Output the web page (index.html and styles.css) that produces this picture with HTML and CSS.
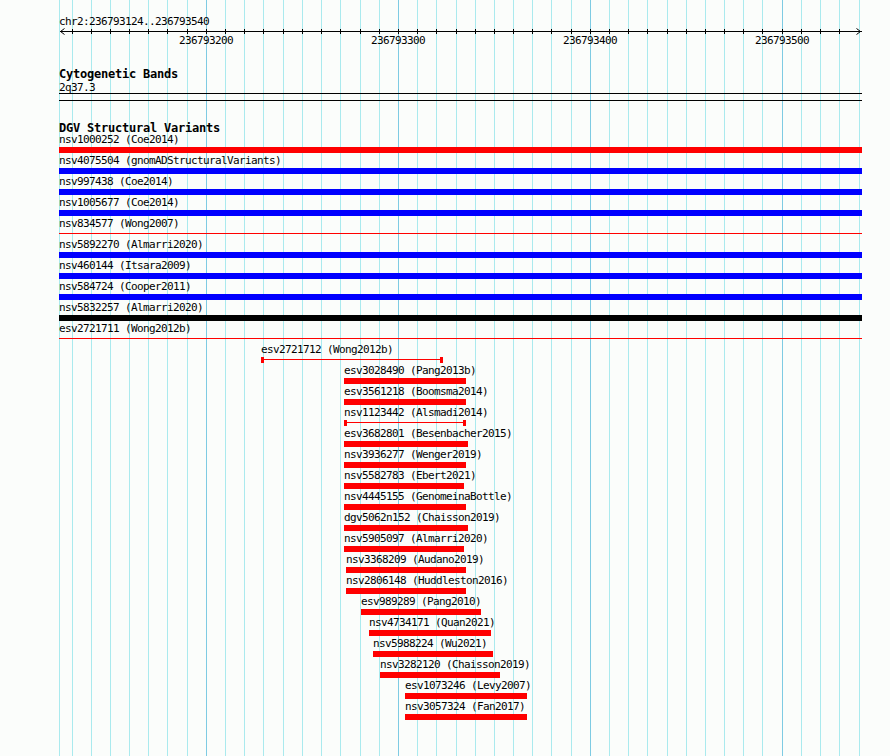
FILE: index.html
```html
<!DOCTYPE html>
<html lang="en">
<head>
    <meta charset="UTF-8">
    <meta name="viewport" content="width=device-width, initial-scale=1.0">
    <title>chr2:236793124..236793540</title>
    <link rel="stylesheet" href="styles.css">
</head>
<body>
<div class="browser">
    <!-- gridlines, every 10bp -->
    <div class="grid">
        <div class="gl" style="left:59px"></div>
        <div class="gl" style="left:72px"></div>
        <div class="gl" style="left:91px"></div>
        <div class="gl" style="left:110px"></div>
        <div class="gl" style="left:129px"></div>
        <div class="gl" style="left:148px"></div>
        <div class="gl" style="left:167px"></div>
        <div class="gl" style="left:187px"></div>
        <div class="gl major" style="left:206px"></div>
        <div class="gl" style="left:225px"></div>
        <div class="gl" style="left:244px"></div>
        <div class="gl" style="left:263px"></div>
        <div class="gl" style="left:283px"></div>
        <div class="gl" style="left:302px"></div>
        <div class="gl" style="left:321px"></div>
        <div class="gl" style="left:340px"></div>
        <div class="gl" style="left:360px"></div>
        <div class="gl" style="left:379px"></div>
        <div class="gl major" style="left:398px"></div>
        <div class="gl" style="left:417px"></div>
        <div class="gl" style="left:436px"></div>
        <div class="gl" style="left:456px"></div>
        <div class="gl" style="left:475px"></div>
        <div class="gl" style="left:494px"></div>
        <div class="gl" style="left:513px"></div>
        <div class="gl" style="left:532px"></div>
        <div class="gl" style="left:551px"></div>
        <div class="gl" style="left:571px"></div>
        <div class="gl major" style="left:590px"></div>
        <div class="gl" style="left:609px"></div>
        <div class="gl" style="left:628px"></div>
        <div class="gl" style="left:647px"></div>
        <div class="gl" style="left:667px"></div>
        <div class="gl" style="left:686px"></div>
        <div class="gl" style="left:705px"></div>
        <div class="gl" style="left:724px"></div>
        <div class="gl" style="left:743px"></div>
        <div class="gl" style="left:762px"></div>
        <div class="gl major" style="left:782px"></div>
        <div class="gl" style="left:801px"></div>
        <div class="gl" style="left:820px"></div>
        <div class="gl" style="left:839px"></div>
        <div class="gl" style="left:859px"></div>
    </div>

    <div class="tracks">
        <div class="locus">chr2:236793124..236793540</div>
        <svg class="ruler" width="803" height="8" viewBox="0 0 803 8">
            <line x1="1" y1="4.5" x2="803" y2="4.5" stroke="#000"/>
            <polyline points="5.5,1.5 1.5,4.5 5.5,7.5" fill="none" stroke="#000"/>
            <polyline points="797.5,1.5 801.5,4.5 797.5,7.5" fill="none" stroke="#000"/>
            <g stroke="#000">
                <line x1="13.5" y1="2" x2="13.5" y2="7"/><line x1="32.5" y1="2" x2="32.5" y2="7"/>
                <line x1="51.5" y1="2" x2="51.5" y2="7"/><line x1="70.5" y1="2" x2="70.5" y2="7"/>
                <line x1="89.5" y1="2" x2="89.5" y2="7"/><line x1="108.5" y1="2" x2="108.5" y2="7"/>
                <line x1="128.5" y1="2" x2="128.5" y2="7"/><line x1="147.5" y1="2" x2="147.5" y2="7"/>
                <line x1="166.5" y1="2" x2="166.5" y2="7"/><line x1="185.5" y1="2" x2="185.5" y2="7"/>
                <line x1="204.5" y1="2" x2="204.5" y2="7"/><line x1="224.5" y1="2" x2="224.5" y2="7"/>
                <line x1="243.5" y1="2" x2="243.5" y2="7"/><line x1="262.5" y1="2" x2="262.5" y2="7"/>
                <line x1="281.5" y1="2" x2="281.5" y2="7"/><line x1="301.5" y1="2" x2="301.5" y2="7"/>
                <line x1="320.5" y1="2" x2="320.5" y2="7"/><line x1="339.5" y1="2" x2="339.5" y2="7"/>
                <line x1="358.5" y1="2" x2="358.5" y2="7"/><line x1="377.5" y1="2" x2="377.5" y2="7"/>
                <line x1="397.5" y1="2" x2="397.5" y2="7"/><line x1="416.5" y1="2" x2="416.5" y2="7"/>
                <line x1="435.5" y1="2" x2="435.5" y2="7"/><line x1="454.5" y1="2" x2="454.5" y2="7"/>
                <line x1="473.5" y1="2" x2="473.5" y2="7"/><line x1="492.5" y1="2" x2="492.5" y2="7"/>
                <line x1="512.5" y1="2" x2="512.5" y2="7"/><line x1="531.5" y1="2" x2="531.5" y2="7"/>
                <line x1="550.5" y1="2" x2="550.5" y2="7"/><line x1="569.5" y1="2" x2="569.5" y2="7"/>
                <line x1="588.5" y1="2" x2="588.5" y2="7"/><line x1="608.5" y1="2" x2="608.5" y2="7"/>
                <line x1="627.5" y1="2" x2="627.5" y2="7"/><line x1="646.5" y1="2" x2="646.5" y2="7"/>
                <line x1="665.5" y1="2" x2="665.5" y2="7"/><line x1="684.5" y1="2" x2="684.5" y2="7"/>
                <line x1="703.5" y1="2" x2="703.5" y2="7"/><line x1="723.5" y1="2" x2="723.5" y2="7"/>
                <line x1="742.5" y1="2" x2="742.5" y2="7"/><line x1="761.5" y1="2" x2="761.5" y2="7"/>
                <line x1="780.5" y1="2" x2="780.5" y2="7"/>
            </g>
        </svg>
        <div class="ticklabels">
            <span style="left:120px">236793200</span>
            <span style="left:312px">236793300</span>
            <span style="left:504px">236793400</span>
            <span style="left:696px">236793500</span>
        </div>

        <div class="track cyto">
            <div class="track-title">Cytogenetic Bands</div>
            <div class="band-name">2q37.3</div>
            <div class="band"></div>
        </div>

        <div class="track dgv">
            <div class="track-title">DGV Structural Variants</div>

            <div class="row"><div class="feat" style="left:0;width:803px"><div class="label">nsv1000252 (Coe2014)</div><div class="bar"></div></div></div>
            <div class="row"><div class="feat" style="left:0;width:803px"><div class="label">nsv4075504 (gnomADStructuralVariants)</div><div class="bar blue"></div></div></div>
            <div class="row"><div class="feat" style="left:0;width:803px"><div class="label">nsv997438 (Coe2014)</div><div class="bar blue"></div></div></div>
            <div class="row"><div class="feat" style="left:0;width:803px"><div class="label">nsv1005677 (Coe2014)</div><div class="bar blue"></div></div></div>
            <div class="row"><div class="feat" style="left:0;width:803px"><div class="label">nsv834577 (Wong2007)</div><div class="thin"></div></div></div>
            <div class="row"><div class="feat" style="left:0;width:803px"><div class="label">nsv5892270 (Almarri2020)</div><div class="bar blue"></div></div></div>
            <div class="row"><div class="feat" style="left:0;width:803px"><div class="label">nsv460144 (Itsara2009)</div><div class="bar blue"></div></div></div>
            <div class="row"><div class="feat" style="left:0;width:803px"><div class="label">nsv584724 (Cooper2011)</div><div class="bar blue"></div></div></div>
            <div class="row"><div class="feat" style="left:0;width:803px"><div class="label">nsv5832257 (Almarri2020)</div><div class="bar black"></div></div></div>
            <div class="row"><div class="feat" style="left:0;width:803px"><div class="label">esv2721711 (Wong2012b)</div><div class="thin"></div></div></div>
            <div class="row"><div class="feat" style="left:202px;width:182px"><div class="label">esv2721712 (Wong2012b)</div><div class="thin caps"></div></div></div>
            <div class="row"><div class="feat" style="left:285px;width:122px"><div class="label">esv3028490 (Pang2013b)</div><div class="bar"></div></div></div>
            <div class="row"><div class="feat" style="left:285px;width:122px"><div class="label">esv3561218 (Boomsma2014)</div><div class="bar"></div></div></div>
            <div class="row"><div class="feat" style="left:285px;width:122px"><div class="label">nsv1123442 (Alsmadi2014)</div><div class="thin caps"></div></div></div>
            <div class="row"><div class="feat" style="left:285px;width:124px"><div class="label">esv3682801 (Besenbacher2015)</div><div class="bar"></div></div></div>
            <div class="row"><div class="feat" style="left:285px;width:122px"><div class="label">nsv3936277 (Wenger2019)</div><div class="bar"></div></div></div>
            <div class="row"><div class="feat" style="left:285px;width:120px"><div class="label">nsv5582783 (Ebert2021)</div><div class="bar"></div></div></div>
            <div class="row"><div class="feat" style="left:285px;width:122px"><div class="label">nsv4445155 (GenomeinaBottle)</div><div class="bar"></div></div></div>
            <div class="row"><div class="feat" style="left:285px;width:124px"><div class="label">dgv5062n152 (Chaisson2019)</div><div class="bar"></div></div></div>
            <div class="row"><div class="feat" style="left:285px;width:120px"><div class="label">nsv5905097 (Almarri2020)</div><div class="bar"></div></div></div>
            <div class="row"><div class="feat" style="left:287px;width:120px"><div class="label">nsv3368209 (Audano2019)</div><div class="bar"></div></div></div>
            <div class="row"><div class="feat" style="left:287px;width:120px"><div class="label">nsv2806148 (Huddleston2016)</div><div class="bar"></div></div></div>
            <div class="row"><div class="feat" style="left:302px;width:120px"><div class="label">esv989289 (Pang2010)</div><div class="bar"></div></div></div>
            <div class="row"><div class="feat" style="left:310px;width:122px"><div class="label">nsv4734171 (Quan2021)</div><div class="bar"></div></div></div>
            <div class="row"><div class="feat" style="left:314px;width:120px"><div class="label">nsv5988224 (Wu2021)</div><div class="bar"></div></div></div>
            <div class="row"><div class="feat" style="left:321px;width:120px"><div class="label">nsv3282120 (Chaisson2019)</div><div class="bar"></div></div></div>
            <div class="row"><div class="feat" style="left:346px;width:122px"><div class="label">esv1073246 (Levy2007)</div><div class="bar"></div></div></div>
            <div class="row"><div class="feat" style="left:346px;width:122px"><div class="label">nsv3057324 (Fan2017)</div><div class="bar"></div></div></div>
        </div>
    </div>
</div>
</body>
</html>
```

FILE: styles.css
```css
body {
    margin: 0;
    background: #fbfdfb;
    color: #000;
    font-family: "DejaVu Sans Mono", monospace;
    font-size: 11px;
    letter-spacing: -0.62px;
}
.browser {
    position: relative;
    height: 756px;
    overflow: hidden;
}
.grid {
    position: absolute;
    top: 0;
    bottom: 0;
    left: 0;
    right: 0;
}
.gl {
    position: absolute;
    top: 0;
    bottom: 0;
    width: 1px;
    background: #aaeaee;
}
.gl.major {
    background: #7ecbe3;
}
.tracks {
    position: relative;
    margin-left: 59px;
    width: 803px;
    padding-top: 16px;
}
.locus {
    height: 11px;
    line-height: 11px;
}
.ruler {
    display: block;
}
.ticklabels {
    position: relative;
    height: 11px;
    line-height: 11px;
}
.ticklabels span {
    position: absolute;
    top: 0;
    width: 54px;
    text-align: center;
}
.track-title {
    font-weight: bold;
    font-size: 12px;
    letter-spacing: -0.22px;
    height: 13px;
    line-height: 13px;
    margin-top: 21px;
}
.cyto .track-title {
    margin-top: 22px;
    margin-bottom: 1px;
}
.dgv .track-title {
    margin-bottom: 1px;
}
.band-name {
    height: 11px;
    line-height: 11px;
}
.band {
    height: 6px;
    border-top: 1px solid #000;
    border-bottom: 1px solid #000;
}
.row {
    position: relative;
    height: 21px;
}
.feat {
    position: absolute;
    top: 0;
}
.label {
    height: 11px;
    line-height: 8px;
    white-space: nowrap;
}
.bar {
    height: 6px;
    background: #ff0000;
}
.bar.blue {
    background: #0000ff;
}
.bar.black {
    background: #000;
}
.thin {
    position: relative;
    height: 6px;
    box-sizing: border-box;
}
.thin::before {
    content: "";
    position: absolute;
    left: 0;
    right: 0;
    top: 2px;
    height: 1px;
    background: #ff0000;
}
.thin.caps {
    border-left: 3px solid #ff0000;
    border-right: 3px solid #ff0000;
}
```
